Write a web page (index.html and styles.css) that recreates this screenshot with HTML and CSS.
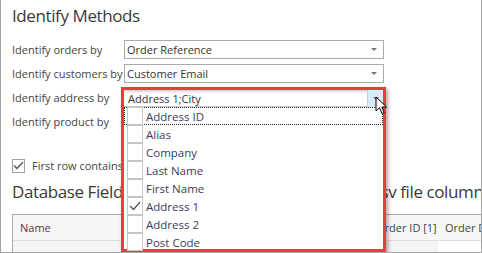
FILE: index.html
```html
<!DOCTYPE html>
<html lang="en">
<head>
    <meta charset="UTF-8">
    <title>Identify Methods</title>
    <link rel="stylesheet" href="styles.css">
</head>
<body>
    <div class="frame">
        <h2 class="title">Identify Methods</h2>
        <div class="form">
            <label class="form-label">Identify orders by</label>
            <div class="combo"><span class="combo-text">Order Reference</span><span class="combo-arrow"></span></div>
            <label class="form-label">Identify customers by</label>
            <div class="combo"><span class="combo-text">Customer Email</span><span class="combo-arrow"></span></div>
            <label class="form-label">Identify address by</label>
            <div class="combo combo-anchor">
                <span class="combo-arrow"></span>
                <!-- opened dropdown, drawn over the form -->
                <div class="popup">
                    <div class="popup-head">
                        <span class="combo-text">Address 1;City</span>
                        <span class="popup-btn"><span class="combo-arrow"></span></span>
                    </div>
                    <ul class="check-list">
                        <li class="check-item check-item-focus"><span class="check-box"></span>Address ID</li>
                        <li class="check-item"><span class="check-box"></span>Alias</li>
                        <li class="check-item"><span class="check-box"></span>Company</li>
                        <li class="check-item"><span class="check-box"></span>Last Name</li>
                        <li class="check-item"><span class="check-box"></span>First Name</li>
                        <li class="check-item"><span class="check-box"><svg width="12" height="10" viewBox="0 0 12 10"><polyline points="1,5 4.5,8.5 11,1" fill="none" stroke="#555" stroke-width="1.3"/></svg></span>Address 1</li>
                        <li class="check-item"><span class="check-box"></span>Address 2</li>
                        <li class="check-item"><span class="check-box"></span>Post Code</li>
                    </ul>
                    <svg class="cursor" width="13" height="19" viewBox="0 0 13 19"><path d="M1 1 L1 15 L4.5 11.8 L7 17.5 L9.2 16.5 L6.8 11 L11.5 11 Z" fill="#fff" stroke="#000" stroke-width="1" stroke-linejoin="round"/></svg>
                </div>
            </div>
            <label class="form-label">Identify product by</label>
            <div class="combo"><span class="combo-arrow"></span></div>
        </div>
        <div class="first-row">
            <span class="small-check"><svg width="11" height="9" viewBox="0 0 11 9"><polyline points="1,4.5 4,7.5 10,1" fill="none" stroke="#555" stroke-width="1.3"/></svg></span>
            <span>First row contains field names</span>
        </div>
        <div class="section-head">
            <h3 class="section-title">Database Fields</h3>
            <h3 class="section-title">Import csv file columns</h3>
        </div>
        <div class="grid">
            <div class="grid-row grid-header">
                <div class="cell cell-name">Name</div>
                <div class="cell cell-col">Order ID [1]</div>
                <div class="cell cell-col">Order Date [2]</div>
            </div>
            <div class="grid-row grid-body">
                <div class="cell cell-name cell-ro"></div>
                <div class="cell cell-col cell-ro"></div>
                <div class="cell cell-col">10245</div>
            </div>
        </div>
    </div>
</body>
</html>
```

FILE: styles.css
```css
:root {
    --text-color: #444;
    --border-color: #ababab;
    --mark-color: #ee3b3f;
}
* {
    box-sizing: border-box;
}
body {
    margin: 0;
    font-family: "Open Sans", "Noto Sans", sans-serif;
    font-size: 11px;
    color: var(--text-color);
    background: #fff;
}
.frame {
    width: 482px;
    height: 253px;
    border: 1px solid #a6a6a6;
    border-top: 0;
    overflow: hidden;
}
.title {
    margin: 4px 0 0 11px;
    font-size: 17px;
    letter-spacing: -0.4px;
    font-weight: normal;
    line-height: 24px;
    color: #3a3a3a;
}
.form {
    display: grid;
    grid-template-columns: 112px 260px;
    grid-auto-rows: 19px;
    row-gap: 5px;
    margin: 12px 0 0 11px;
}
.form-label {
    line-height: 19px;
    white-space: nowrap;
}
.combo {
    position: relative;
    display: flex;
    align-items: center;
    justify-content: space-between;
    border: 1px solid var(--border-color);
    padding: 0 6px 0 2px;
    color: #333;
}
.combo-anchor {
    justify-content: flex-end;
}
.combo-arrow {
    width: 0;
    height: 0;
    border-left: 3px solid transparent;
    border-right: 3px solid transparent;
    border-top: 3px solid #777;
}
.popup {
    position: absolute;
    left: -4px;
    top: -2px;
    width: 265px;
    height: 165px;
    border: 3px solid var(--mark-color);
    background: #fff;
    box-shadow: 2px 2px 4px rgba(0, 0, 0, 0.35);
    z-index: 2;
}
.popup-head {
    display: flex;
    align-items: center;
    justify-content: space-between;
    height: 17px;
    padding-left: 4px;
    border-bottom: 1px solid #c8c8c8;
    background: linear-gradient(#c9c9c9 0, #f3f3f3 2px, #fff 4px);
    color: #333;
}
.popup-btn {
    display: flex;
    align-items: center;
    justify-content: center;
    width: 16px;
    height: 17px;
    background: #dbeaf9;
    border-left: 1px solid #b9d3ee;
}
.check-list {
    list-style: none;
    margin: 0;
    padding: 0;
}
.check-item {
    display: flex;
    align-items: center;
    height: 18px;
    padding-left: 2px;
    color: #3b3b60;
    font-size: 11.5px;
    border: 1px dotted transparent;
}
.check-item-focus {
    border-color: #222;
}
.check-box {
    display: flex;
    align-items: center;
    justify-content: center;
    width: 16px;
    height: 18px;
    margin-right: 3px;
    border: 1px solid #c6c6c6;
    background: #fff;
}
.cursor {
    position: absolute;
    left: 251px;
    top: 6px;
}
.first-row {
    display: flex;
    align-items: center;
    gap: 7px;
    margin: 27px 0 0 11px;
    height: 15px;
    white-space: nowrap;
}
.small-check {
    display: flex;
    align-items: center;
    justify-content: center;
    width: 13px;
    height: 14px;
    border: 1px solid #a0a0a0;
}
.section-head {
    display: grid;
    grid-template-columns: 305px auto;
    margin: 7px 0 0 11px;
    white-space: nowrap;
}
.section-title {
    margin: 0;
    font-size: 17px;
    letter-spacing: -0.4px;
    font-weight: normal;
    line-height: 24px;
    color: #3a3a3a;
}
.grid {
    margin: 10px 0 0 11px;
    width: 520px;
    border: 1px solid var(--border-color);
    border-bottom: 0;
}
.grid-row {
    display: flex;
}
.grid-header {
    background: #f6f6f6;
    border-bottom: 1px solid #dedede;
}
.cell {
    display: flex;
    align-items: center;
    padding: 0 7px;
    white-space: nowrap;
}
.cell-name {
    width: 356px;
}
.cell-col {
    width: 69px;
}
.grid-header .cell {
    height: 25px;
}
.grid-body .cell {
    height: 28px;
}
.cell-ro {
    background: #f4f4f4;
}
```
